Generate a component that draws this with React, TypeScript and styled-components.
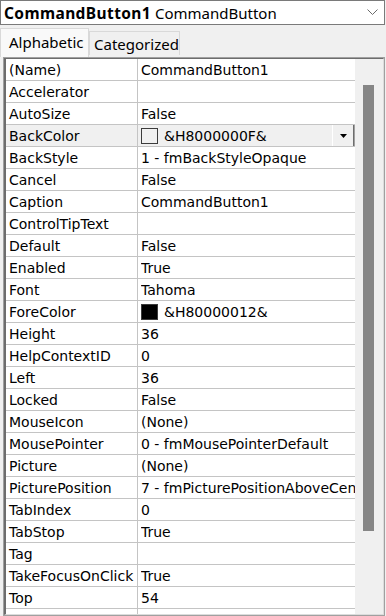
import styled, { createGlobalStyle } from "styled-components";

const GlobalStyle = createGlobalStyle`
  html, body {
    margin: 0;
    padding: 0;
    background: #f0f0f0;
    font-family: "DejaVu Sans", Verdana, sans-serif;
    font-size: 14px;
    color: #000;
  }
`;

type Prop = { name: string; value: string; swatch?: string; selected?: boolean };

const props: Prop[] = [
  { name: "(Name)", value: "CommandButton1" },
  { name: "Accelerator", value: "" },
  { name: "AutoSize", value: "False" },
  { name: "BackColor", value: "&H8000000F&", swatch: "#f0f0f0", selected: true },
  { name: "BackStyle", value: "1 - fmBackStyleOpaque" },
  { name: "Cancel", value: "False" },
  { name: "Caption", value: "CommandButton1" },
  { name: "ControlTipText", value: "" },
  { name: "Default", value: "False" },
  { name: "Enabled", value: "True" },
  { name: "Font", value: "Tahoma" },
  { name: "ForeColor", value: "&H80000012&", swatch: "#000" },
  { name: "Height", value: "36" },
  { name: "HelpContextID", value: "0" },
  { name: "Left", value: "36" },
  { name: "Locked", value: "False" },
  { name: "MouseIcon", value: "(None)" },
  { name: "MousePointer", value: "0 - fmMousePointerDefault" },
  { name: "Picture", value: "(None)" },
  { name: "PicturePosition", value: "7 - fmPicturePositionAboveCenter" },
  { name: "TabIndex", value: "0" },
  { name: "TabStop", value: "True" },
  { name: "Tag", value: "" },
  { name: "TakeFocusOnClick", value: "True" },
  { name: "Top", value: "54" },
  { name: "", value: "" },
];

const App = () => {
  return (
    <>
      <GlobalStyle />
      <Window>
        <Combo>
          <ComboText>
            <ObjectName>CommandButton1</ObjectName> CommandButton
          </ComboText>
          <svg width="11" height="7" viewBox="0 0 11 7">
            <path d="M0.5 0.5 L5.5 5.5 L10.5 0.5" fill="none" stroke="#6b6b6b" strokeWidth="1" />
          </svg>
        </Combo>
        <TabStrip>
          <Tab $active>Alphabetic</Tab>
          <Tab>Categorized</Tab>
        </TabStrip>
        <Panel>
          <Inner>
            <Grid>
              {props.map((p, i) => (
                <Row key={i} $selected={p.selected}>
                  <NameCell>{p.name}</NameCell>
                  <ValueCell>
                    {p.swatch && <Swatch $color={p.swatch} />}
                    <ValueText>{p.value}</ValueText>
                    {p.selected && (
                      <DropButton>
                        <svg width="7" height="4" viewBox="0 0 7 4">
                          <path d="M0 0 H7 L3.5 4 Z" fill="#000" />
                        </svg>
                      </DropButton>
                    )}
                  </ValueCell>
                </Row>
              ))}
            </Grid>
            <ScrollBar>
              <Thumb />
            </ScrollBar>
          </Inner>
        </Panel>
      </Window>
    </>
  );
};

const Window = styled.div`
  width: 386px;
  height: 616px;
  display: flex;
  flex-direction: column;
  overflow: hidden;
`;

const Combo = styled.div`
  box-sizing: border-box;
  height: 25px;
  width: 385px;
  background: #fff;
  border: 1px solid #7a7a7a;
  display: flex;
  align-items: center;
  justify-content: space-between;
  padding: 0 6px 0 3px;
  font-family: "Noto Sans", "Open Sans", sans-serif;
  font-size: 15px;
`;

const ComboText = styled.div`
  white-space: nowrap;
  line-height: 22px;
`;

const ObjectName = styled.b`
  font-size: 15.5px;
  letter-spacing: 0.4px;
`;

const TabStrip = styled.div`
  height: 32px;
  display: flex;
  align-items: flex-end;
  font-family: "Noto Sans", "Open Sans", sans-serif;
  font-size: 15px;
`;

const Tab = styled.div<{ $active?: boolean }>`
  box-sizing: border-box;
  width: ${(p) => (p.$active ? "89px" : "91px")};
  height: ${(p) => (p.$active ? "29px" : "24px")};
  margin-bottom: ${(p) => (p.$active ? "0" : "2px")};
  padding: ${(p) => (p.$active ? "0 0 2px 8px" : "0 0 0 4px")};
  background: ${(p) => (p.$active ? "#f9f9f9" : "#f0f0f0")};
  border: 1px solid #d9d9d9;
  border-bottom: none;
  display: flex;
  align-items: center;
  white-space: nowrap;
`;

const Panel = styled.div`
  box-sizing: border-box;
  height: 559px;
  margin: 0 1px 0 3px;
  border: 1px solid #a0a0a0;
  display: flex;
`;

const Inner = styled.div`
  flex: 1;
  display: flex;
  border-left: 2px solid #6d6d6d;
  border-top: 1px solid #6d6d6d;
  border-right: 1px solid #dcdcdc;
  border-bottom: 1px solid #dcdcdc;
  overflow: hidden;
`;

const Grid = styled.div`
  width: 349px;
  background: #fff;
  overflow: hidden;
`;

const Row = styled.div<{ $selected?: boolean }>`
  display: grid;
  grid-template-columns: 132px 1fr;
  height: 22px;
  box-sizing: border-box;
  border-bottom: 1px solid #c4c4c4;
  background: ${(p) => (p.$selected ? "#f0f0f0" : "#fff")};
`;

const NameCell = styled.div`
  border-right: 1px solid #c4c4c4;
  padding-left: 3px;
  display: flex;
  align-items: center;
  white-space: nowrap;
  overflow: hidden;
`;

const ValueCell = styled.div`
  display: flex;
  align-items: center;
  padding-left: 3px;
  overflow: hidden;
  white-space: nowrap;
`;

const Swatch = styled.span<{ $color: string }>`
  flex: none;
  width: 17px;
  height: 16px;
  box-sizing: border-box;
  border: 1px solid #3c3c3c;
  background: ${(p) => p.$color};
  margin-right: 6px;
`;

const ValueText = styled.span`
  flex: 1;
  overflow: hidden;
`;

const DropButton = styled.div`
  flex: none;
  box-sizing: border-box;
  width: 22px;
  height: 24px;
  margin-right: 1px;
  margin-top: 1px;
  background: #f0f0f0;
  border: 1px solid;
  border-color: #fff #6d6d6d #6d6d6d #fff;
  box-shadow: 1px 1px 0 #a0a0a0;
  display: flex;
  align-items: center;
  justify-content: center;
`;

const ScrollBar = styled.div`
  flex: 1;
  background: #f0f0f0;
  padding: 26px 0 0 8px;
`;

const Thumb = styled.div`
  width: 11px;
  height: 446px;
  background: #868686;
`;

export default App;
